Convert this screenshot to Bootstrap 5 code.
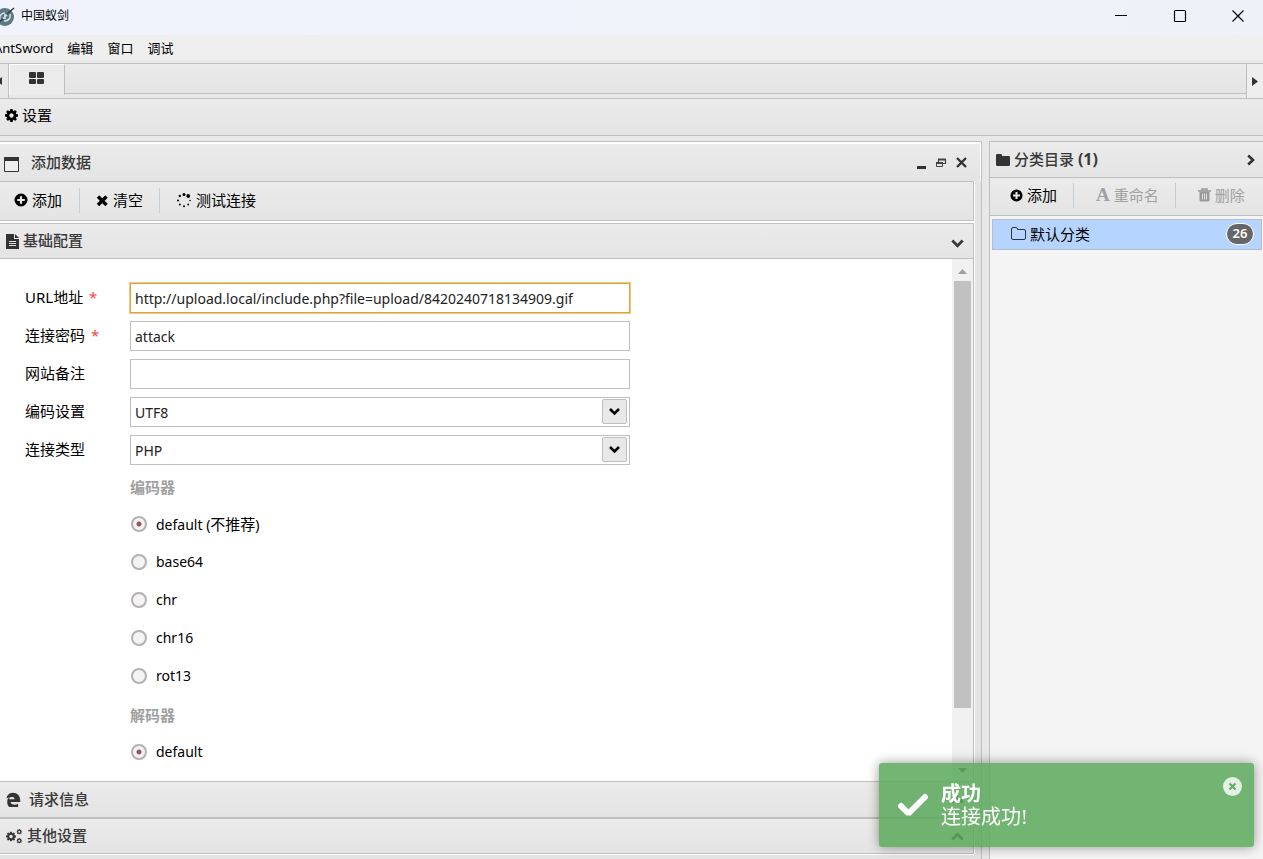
<!DOCTYPE html>
<html lang="zh-CN">
<head>
<meta charset="utf-8">
<meta name="viewport" content="width=device-width, initial-scale=1">
<title>中国蚁剑</title>
<link href="https://cdn.jsdelivr.net/npm/bootstrap@5.3.0/dist/css/bootstrap.min.css" rel="stylesheet">
<style>
:root{--line:#bfbfbf;--ink:#393939;--face:linear-gradient(#ebebeb,#e4e4e4)}
body{font-family:"Noto Sans","Noto Sans CJK SC",sans-serif;font-size:14px;line-height:20px;color:#000;background:#e8e8e8}
svg{display:block;flex:none}
.cn{font-size:15px}
button{border:0;background:none;padding:0;color:inherit;font-family:inherit;line-height:20px}
.titlebar{height:35px;background:linear-gradient(90deg,#f0f3fc,#edf2f8);font-size:12px}
.titlebar .logo{margin-left:-7px;margin-right:6px;margin-bottom:4px}
.winctl{gap:41px;padding-right:17px}
.menubar{height:25px;background:#efefef;font-size:13px;gap:14px}
.menubar a{color:#000;text-decoration:none}
.menubar a:first-child{margin-left:-6px}
.tabstrip{height:36px;margin-top:3px;border:solid var(--line);border-width:1px 0}
.tabstrip .arrow{width:9px;border-right:1px solid var(--line)}
.tabstrip .arrow.next{width:17px;border:0;border-left:1px solid var(--line);background:#eee}
.tabstrip .tile{width:56px;height:31px;border-right:1px solid var(--line);border-left:1px solid #fff;border-top:1px solid #fff;background:#ebebeb;padding:0 2px 3px 0}
.tabstrip .rest{height:30px;border-bottom:1px solid var(--line);background:var(--face)}
.settings{height:37px;border-bottom:1px solid var(--line);background:var(--face);padding:0 5px 4px}
.workspace{margin-top:5px;gap:7px;min-height:0}
.mainpane{border:solid var(--line);border-width:1px 1px 0 0;background:#e4e4e4}
.panehead{height:39px;border:solid #fff;border-width:2px 1px 0 0;background:var(--face);padding:0 12px 0 4px;color:var(--ink)}
.inner{margin-right:7px;margin-bottom:5px;box-shadow:0 1px #fff,1px 0 #fff}
.tools{height:40px;border:solid var(--line);border-width:1px 1px 1px 0;background:var(--face);padding-bottom:2px}
.tools button,.sidetools button{font-size:15px;gap:4px}
.tools button:first-child{padding-left:14px}
.tools button:first-child{padding-right:17px}
.sep{width:1px;height:25px;background:#c3ced6}
.spacer{height:2px;background:#fff}
.acc{height:36px;border:solid var(--line);border-width:1px 1px 1px 0;background:var(--face);color:var(--ink);padding:0 9px 0 6px}
.acc.follow{height:37px}
.acctext{font-size:15px;font-weight:500;padding-bottom:2px}
.content{background:#fff;border-right:1px solid var(--line);min-height:0;overflow:hidden}
.formarea{padding:20px 0 0 25px}
.line{height:38px}
.line label{padding-bottom:2px}
.line .row-label{width:105px;font-size:15px}
.line .star{color:#f44;font-size:15px;margin-left:2px}
.field{width:500px;height:30px;border:1px solid var(--line);border-radius:0;padding:0 4px;font-size:14px;color:#222;box-shadow:none;background-color:#fff}
.field.active-field{border-color:#dfa13c;box-shadow:0 0 0 1px #f0c987}
select.field{background-image:url("data:image/svg+xml,%3Csvg xmlns='http://www.w3.org/2000/svg' width='26' height='26'%3E%3Crect x='.5' y='.5' width='24' height='24' rx='1.500' fill='%23e8e8e8' stroke='%23bfbfbf'/%3E%3Cpath d='M8 10l4.500 4.500L17 10' fill='none' stroke='%23000' stroke-width='2.600'/%3E%3C/svg%3E");background-size:26px 26px;background-position:right 1px center}
.caption{color:#a0a0a0;font-size:15px;font-weight:700}
.indent{margin-left:105px}
.indent .line{padding-bottom:2px}
.dot{appearance:none;width:16px;height:16px;margin:0 9px 2px 1px;border:2px solid #b5b0b2;border-radius:50%;background:#f4f4f4}
.dot:checked{background:radial-gradient(circle,#a05555 2px,#f4f4f6 3px)}
.scroll{width:21px;background:#f1f1f1;padding:10px 2px 8px}
.scroll .thumb{height:427px;background:#c1c1c1;margin-top:7px}
.sidepane{width:274px;border:solid var(--line);border-width:1px 0 0 1px;background:#f4f4f4}
.sidehead{height:36px;border-bottom:1px solid var(--line);background:var(--face);padding:0 7px 0 6px;color:var(--ink)}
.sidehead .side-title{font-size:15px;font-weight:500;padding-bottom:2px}
.sidehead b{font-size:16px}
.sidetools{height:38px;border-bottom:1px solid var(--line);background:var(--face);padding-bottom:3px}
.sidetools button:disabled{color:#a0a0a0}
.sidetools button:disabled{padding-left:18px}
.glyph-a{font:bold 19px/20px "Liberation Serif",serif}
.entry{margin:3px 1px 0 2px;height:31px;border:1px solid #b3bfce;background:#b5d4ff;padding:0 7px 2px 18px;font-size:15px}
.count{width:28px;height:22px;border:1px solid #fff;border-radius:11px;background:#666;color:#fff;font-size:13px;line-height:19px;font-weight:600}
.notice{position:fixed;right:9px;bottom:12px;width:375px;height:84px;border-radius:3px;background:rgba(90,168,90,.85);box-shadow:0 0 12px rgba(0,0,0,.4);color:#fff;padding:2px 12px 0 18px;font-family:"Liberation Serif","Noto Sans CJK SC",serif;font-size:20px;line-height:23px}
.notice .close-x{align-self:flex-start;margin-top:12px}
</style>
</head>
<body>
<svg width="0" height="0" class="position-absolute" aria-hidden="true">
<symbol id="cog" viewBox="128 128 1536 1536"><path fill="currentColor" d="M1152 896q0-106-75-181t-181-75-181 75-75 181 75 181 181 75 181-75 75-181zm512-109v222q0 12-8 23t-20 13l-185 28q-19 54-39 91 35 50 107 138 10 12 10 25t-9 23q-27 37-99 108t-94 71q-12 0-26-9l-138-108q-44 23-91 38-16 136-29 186-7 28-36 28h-222q-14 0-24.500-8.500t-11.500-21.500l-28-184q-49-16-90-37l-141 107q-10 9-25 9-14 0-25-11-126-114-165-168-7-10-7-23 0-12 8-23 15-21 51-66.500t54-70.500q-27-50-41-99l-183-27q-13-2-21-12.500t-8-23.500v-222q0-12 8-23t19-13l186-28q14-46 39-92-40-57-107-138-10-12-10-24 0-10 9-23 26-36 98.500-107.500t94.500-71.500q13 0 26 10l138 107q44-23 91-38 16-136 29-186 7-28 36-28h222q14 0 24.500 8.500t11.500 21.500l28 184q49 16 90 37l142-107q9-9 24-9 13 0 25 10 129 119 165 170 7 8 7 22 0 12-8 23-15 21-51 66.500t-54 70.500q26 50 41 98l183 28q13 2 21 12.500t8 23.500z"/></symbol>
<symbol id="plus" viewBox="0 0 14 14"><path fill="currentColor" fill-rule="evenodd" d="M7 .5a6.500 6.500 0 1 0 0 13a6.500 6.500 0 0 0 0-13zM5.900 3.200h2.200v2.700h2.700v2.200H8.100v2.700H5.900V8.100H3.200V5.900h2.700z"/></symbol>
<symbol id="down" viewBox="0 0 12 10"><path d="M1.200 2.200L6 7l4.800-4.800" fill="none" stroke="currentColor" stroke-width="2.600"/></symbol>
<symbol id="up" viewBox="0 0 12 10"><path d="M1.200 7.800L6 3l4.800 4.800" fill="none" stroke="currentColor" stroke-width="2.600"/></symbol>
</svg>
<div class="d-flex flex-column vh-100 overflow-hidden">
<header class="titlebar d-flex align-items-center flex-shrink-0">
<svg class="logo" width="22" height="22" viewBox="0 0 22 22"><circle cx="12" cy="12" r="9" fill="#5d7a86"/><path d="M7 15c-1-5 2-7 5-7M17 9c1 5-2 7-6 7M10 13.500l4-3.500M12 9v5" fill="none" stroke="#d5e2e8" stroke-width="1.500"/><path d="M14 9l7-6M4 18l6-4" stroke="#333d42" stroke-width="1.500"/></svg>
<span class="flex-grow-1 pb-1">中国蚁剑</span>
<div class="winctl d-flex align-items-center pb-1">
<button aria-label="最小化"><svg width="18" height="18" viewBox="0 0 18 18"><path d="M3 8.500h12" stroke="#000"/></svg></button>
<button aria-label="最大化"><svg width="18" height="18" viewBox="0 0 18 18"><rect x="3.500" y="3.500" width="11" height="11" rx="1" fill="none" stroke="#000" stroke-width="1.200"/></svg></button>
<button aria-label="关闭"><svg width="16" height="18" viewBox="0 0 16 18"><path d="M2.500 3.500l11 11m0-11l-11 11" stroke="#000" stroke-width="1.200"/></svg></button>
</div>
</header>
<nav class="menubar d-flex align-items-center flex-shrink-0"><a href="#">AntSword</a><a href="#">编辑</a><a href="#">窗口</a><a href="#">调试</a></nav>
<div class="tabstrip d-flex flex-shrink-0">
<button class="arrow" aria-label="向左"><svg width="5" height="10" viewBox="0 0 5 10"><path d="M2 1v8L-3 5z" fill="#333"/></svg></button>
<button class="tile d-flex align-items-center justify-content-center" aria-label="主页"><svg width="15" height="13" viewBox="0 0 15 13"><path fill="#333" d="M1 0h5a1 1 0 0 1 1 1v4a1 1 0 0 1-1 1H1a1 1 0 0 1-1-1V1a1 1 0 0 1 1-1zm8 0h5a1 1 0 0 1 1 1v4a1 1 0 0 1-1 1H9a1 1 0 0 1-1-1V1a1 1 0 0 1 1-1zM1 7h5a1 1 0 0 1 1 1v3a1 1 0 0 1-1 1H1a1 1 0 0 1-1-1V8a1 1 0 0 1 1-1zm8 0h5a1 1 0 0 1 1 1v3a1 1 0 0 1-1 1H9a1 1 0 0 1-1-1V8a1 1 0 0 1 1-1z"/></svg></button>
<div class="rest flex-grow-1"></div>
<button class="arrow next d-flex align-items-center justify-content-center" aria-label="向右"><svg width="6" height="9" viewBox="0 0 6 9"><path d="M0 0v9l6-4.500z" fill="#333"/></svg></button>
</div>
<div class="settings d-flex align-items-center flex-shrink-0"><button class="cn d-flex align-items-center gap-1"><svg width="13" height="13"><use href="#cog"/></svg>设置</button></div>

<div class="workspace d-flex flex-grow-1">
<main class="mainpane flex-grow-1 d-flex flex-column">
<div class="panehead d-flex align-items-center flex-shrink-0">
<svg class="mt-1" width="15" height="15" viewBox="0 0 15 15"><path d="M.5.500h14v14H.5z" fill="#eee" stroke="#333"/><path d="M0 0h15v4H0z" fill="#333"/></svg>
<span class="acctext flex-grow-1 ms-2 ps-1">添加数据</span>
<div class="d-flex align-items-center gap-2">
<button aria-label="折叠"><svg width="10" height="12" viewBox="0 0 10 12"><path d="M0 10.500h9" stroke="#333" stroke-width="3"/></svg></button>
<button aria-label="还原"><svg width="12" height="12" viewBox="0 0 12 12"><path d="M3.500 5V2.500h7v4H8" fill="none" stroke="#444" stroke-width="1.200"/><path d="M3 2.500h8M1 6h7" stroke="#444" stroke-width="2"/><path d="M1.500 6v3.500h6V6" fill="none" stroke="#444"/></svg></button>
<button aria-label="关闭"><svg width="13" height="13" viewBox="0 0 13 13"><path d="M2 2l9 9M11 2l-9 9" stroke="#333" stroke-width="2.400"/></svg></button>
</div>
</div>
<div class="inner d-flex flex-column flex-grow-1">
<div class="tools d-flex align-items-center flex-shrink-0">
<button class="d-flex align-items-center"><svg width="14" height="14"><use href="#plus"/></svg>添加</button><span class="sep"></span>
<button class="d-flex align-items-center ps-3 pe-3"><svg width="13" height="13" viewBox="0 0 13 13"><path d="M2 2.500l8.500 8.500m0-8.500L2 11" stroke="#000" stroke-width="3.400"/></svg>清空</button><span class="sep"></span>
<button class="d-flex align-items-center ps-3"><svg width="16" height="16" viewBox="0 0 16 16"><circle cx="8" cy="2.500" r="1.500"/><circle cx="12.200" cy="4" r="1.900"/><circle cx="14" cy="8.500" r=".8"/><circle cx="12.200" cy="12.500" r=".9"/><circle cx="8" cy="14.300" r="1"/><circle cx="3.800" cy="12.500" r="1"/><circle cx="2" cy="8.500" r="1.100"/><circle cx="3.800" cy="4" r="1.200"/></svg>测试连接</button>
</div>
<div class="spacer flex-shrink-0"></div>
<button class="acc d-flex align-items-center flex-shrink-0 w-100"><svg width="13" height="15" viewBox="0 0 13 15"><path fill="#333" d="M0 0h8v5h5v10H0zM9 0l4 4H9z"/><path d="M3 7.500h7M3 9.500h7M3 11.500h7" stroke="#ddd"/></svg><span class="acctext flex-grow-1 text-start ms-1">基础配置</span><svg class="mt-1" width="13" height="11"><use href="#down"/></svg></button>
<div class="content d-flex flex-grow-1">
<form class="formarea flex-grow-1">
<div class="line d-flex align-items-center"><label class="row-label" for="url">URL地址 <span class="star">*</span></label><input id="url" class="field active-field form-control" value="http://upload.local/include.php?file=upload/8420240718134909.gif"></div>
<div class="line d-flex align-items-center"><label class="row-label" for="pwd">连接密码 <span class="star">*</span></label><input id="pwd" class="field form-control" value="attack"></div>
<div class="line d-flex align-items-center"><label class="row-label" for="note">网站备注</label><input id="note" class="field form-control"></div>
<div class="line d-flex align-items-center"><label class="row-label" for="enc">编码设置</label><select id="enc" class="field form-select"><option>UTF8</option></select></div>
<div class="line d-flex align-items-center"><label class="row-label" for="type">连接类型</label><select id="type" class="field form-select"><option>PHP</option></select></div>
<div class="indent">
<div class="line d-flex align-items-center caption">编码器</div>
<div class="line d-flex align-items-center"><input class="dot" type="radio" name="encoder" id="e1" checked><label for="e1">default (<span class="cn">不推荐</span>)</label></div>
<div class="line d-flex align-items-center"><input class="dot" type="radio" name="encoder" id="e2"><label for="e2">base64</label></div>
<div class="line d-flex align-items-center"><input class="dot" type="radio" name="encoder" id="e3"><label for="e3">chr</label></div>
<div class="line d-flex align-items-center"><input class="dot" type="radio" name="encoder" id="e4"><label for="e4">chr16</label></div>
<div class="line d-flex align-items-center"><input class="dot" type="radio" name="encoder" id="e5"><label for="e5">rot13</label></div>
<div class="line d-flex align-items-center caption">解码器</div>
<div class="line d-flex align-items-center"><input class="dot" type="radio" name="decoder" id="d1" checked><label for="d1">default</label></div>
</div>
</form>
<div class="scroll d-flex flex-column flex-shrink-0">
<svg class="mx-auto" width="9" height="5" viewBox="0 0 9 5"><path d="M0 5h9L4.500 0z" fill="#a0a0a0"/></svg>
<div class="thumb flex-shrink-0"></div>
<svg class="mx-auto mt-auto" width="9" height="5" viewBox="0 0 9 5"><path d="M0 0h9L4.500 5z" fill="#505050"/></svg>
</div>
</div>
<button class="acc follow d-flex align-items-center flex-shrink-0 w-100"><svg width="15" height="15" viewBox="0 0 1792 1792"><path fill="#333" d="M65 780h1q22-180 101-326t224-240q200-134 466-134 168 0 326 66t267 182q126 133 184 297t58 386v189H560q0 84 42 146t109 97 145 52 157 17 157-18 145-44 124-60v368q-90 50-190 80t-193 43-190 13q-228 0-410-95T209 1540t-64-390q0-188 92-336t284-242q-61 66-97 141t-52 159h648q0-140-79-210t-227-70q-178 0-351 53T65 780z"/></svg><span class="acctext flex-grow-1 text-start ms-1 ps-1">请求信息</span><svg width="13" height="11"><use href="#up"/></svg></button>
<button class="acc d-flex align-items-center flex-shrink-0 w-100"><svg width="17" height="15" viewBox="0 0 17 15"><use href="#cog" x="0" y="2.500" width="10" height="10"/><use href="#cog" x="10.500" y="0" width="5.500" height="5.500"/><use href="#cog" x="10.500" y="9" width="5.500" height="5.500"/></svg><span class="acctext flex-grow-1 text-start ms-1">其他设置</span><svg width="13" height="11"><use href="#up"/></svg></button>
</div>
</main>
<aside class="sidepane flex-shrink-0">
<div class="sidehead d-flex align-items-center"><svg width="14" height="12" viewBox="0 0 14 12"><path fill="#333" d="M1.300 0h3.400Q6 0 6 1.300V2h6.700Q14 2 14 3.300v7.400Q14 12 12.700 12H1.300Q0 12 0 10.700V1.300Q0 0 1.300 0z"/></svg><span class="side-title flex-grow-1 ms-1">分类目录 <b>(1)</b></span><svg width="10" height="12" viewBox="0 0 10 12"><path d="M2.200 1.500L7 6l-4.800 4.500" fill="none" stroke="#333" stroke-width="2.600"/></svg></div>
<div class="sidetools d-flex align-items-center">
<button class="d-flex align-items-center ms-1 px-3"><svg width="13" height="13"><use href="#plus"/></svg>添加</button><span class="sep"></span>
<button disabled class="d-flex align-items-center ms-1 pe-3"><span class="glyph-a" aria-hidden="true">A</span>重命名</button><span class="sep"></span>
<button disabled class="d-flex align-items-center ms-1"><svg width="13" height="14" viewBox="0 0 13 14"><path d="M4 2.500V1h5v1.500M0 3h13" fill="none" stroke="#999" stroke-width="1.500"/><path d="M1.500 3.500h10V12q0 1.500-1.500 1.500H3Q1.500 13.500 1.500 12z" fill="#999"/><path d="M4.500 5.500v6m2-6v6m2-6v6" stroke="#e6e6e6" stroke-width=".9"/></svg>删除</button>
</div>
<div class="entry d-flex align-items-center"><svg width="15" height="13" viewBox="0 0 15 13"><path fill="none" stroke="#26364a" d="M2 .5h3q1.500 0 1.500 2H13q1.500 0 1.500 1.500v7q0 1.500-1.500 1.500H2Q.5 12.500.5 11V2Q.5.500 2 .5z"/></svg><span class="flex-grow-1 ms-1">默认分类</span><span class="count text-center">26</span></div>
</aside>
</div>
</div>
<div class="notice d-flex align-items-center" role="alert">
<svg width="32" height="26" viewBox="0 0 32 26"><path d="M4 13l7.500 7.500L28 4" fill="none" stroke="#fff" stroke-width="6" stroke-linecap="round" stroke-linejoin="bevel"/></svg>
<div class="flex-grow-1 ms-2 ps-1"><strong>成功</strong><div>连接成功!</div></div>
<button class="close-x" aria-label="关闭提示"><svg width="19" height="19" viewBox="0 0 19 19"><circle cx="9.500" cy="9.500" r="9.500" fill="#e3f0e3"/><path d="M6.500 6.500l6 6m0-6l-6 6" stroke="#65a965" stroke-width="2"/></svg></button>
</div>
<script src="https://cdn.jsdelivr.net/npm/bootstrap@5.3.0/dist/js/bootstrap.bundle.min.js"></script>
</body>
</html>
